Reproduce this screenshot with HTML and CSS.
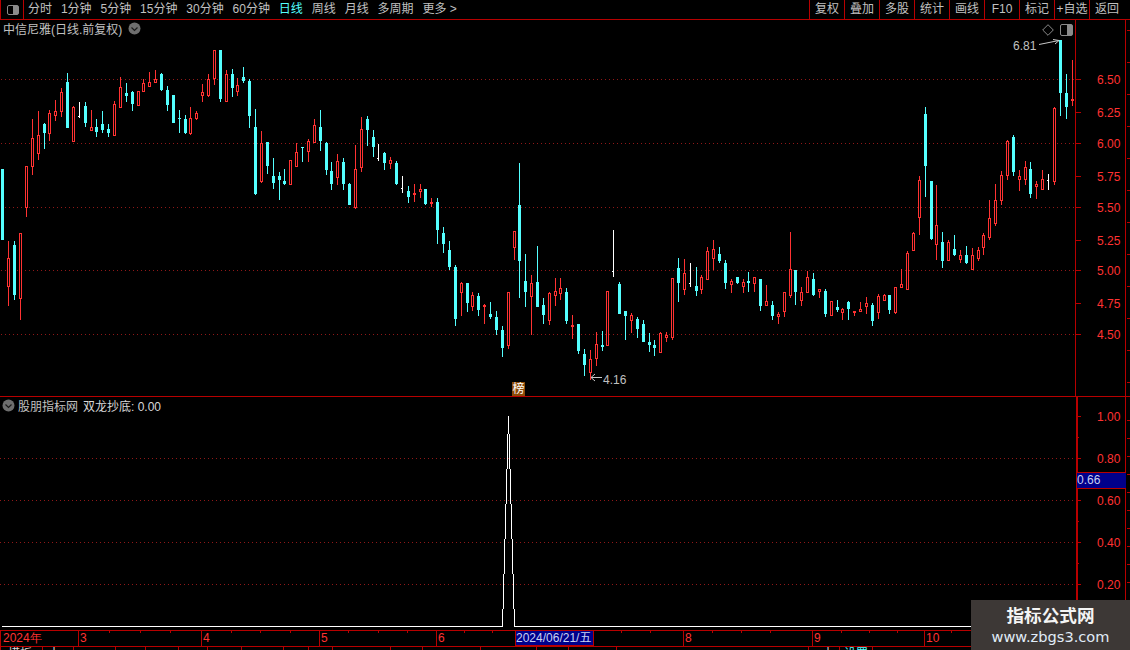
FILE: index.html
```html
<!DOCTYPE html>
<html lang="zh">
<head>
<meta charset="utf-8">
<title>中信尼雅</title>
<link rel="stylesheet" href="styles.css">
</head>
<body>
<div class="app">
  <header class="topbar">
    <div class="side-btn">
      <svg class="icon" width="14" height="12" viewBox="0 0 14 12"><rect x="1.5" y="1.5" width="11" height="9" rx="1.5" class="ic-line"/><rect x="7" y="2" width="5" height="8" class="ic-fill"/></svg>
    </div>
    <nav class="periods">
      <span>分时</span><span>1分钟</span><span>5分钟</span><span>15分钟</span><span>30分钟</span><span>60分钟</span><span class="active">日线</span><span>周线</span><span>月线</span><span>多周期</span><span>更多 &gt;</span>
    </nav>
    <nav class="tools">
      <span>复权</span><span>叠加</span><span>多股</span><span>统计</span><span>画线</span><span>F10</span><span>标记</span><span>+自选</span><span class="last">返回</span>
    </nav>
  </header>

  <section class="pane pane-main">
    <div class="pane-title">
      <span>中信尼雅(日线.前复权)</span>
      <svg class="chev" width="13" height="13" viewBox="0 0 13 13"><circle cx="6.5" cy="6.5" r="6" class="chev-bg"/><path d="M3.5 5.5 6.5 8.5 9.5 5.5" class="chev-line"/></svg>
    </div>
    <svg id="kline" class="plot" width="1075" height="376" viewBox="0 20 1075 376"></svg>
    <svg id="main-axis" class="axis" width="55" height="376" viewBox="1075 20 55 376"></svg>
    <div class="corner-tools">
      <svg width="12" height="12" viewBox="0 0 12 12"><path d="M6 .7 11.3 6 6 11.3 .7 6Z" class="ic-line"/></svg>
      <svg width="13" height="12" viewBox="0 0 13 12"><rect x=".5" y=".5" width="12" height="11" rx="1.5" class="ic-line"/><rect x="7" y="1" width="5" height="10" class="ic-fill"/></svg>
    </div>
    <span class="badge">榜</span>
  </section>

  <section class="pane pane-sub">
    <div class="pane-title sub-title">
      <svg class="chev" width="13" height="13" viewBox="0 0 13 13"><circle cx="6.5" cy="6.5" r="6" class="chev-bg"/><path d="M3.5 5.5 6.5 8.5 9.5 5.5" class="chev-line"/></svg>
      <span>股朋指标网</span>
      <span class="value">双龙抄底: 0.00</span>
    </div>
    <svg id="indicator" class="plot" width="1075" height="233" viewBox="0 397 1075 233"></svg>
    <svg id="sub-axis" class="axis" width="55" height="233" viewBox="1075 397 55 233"></svg>
    <div class="cursor-value">0.66</div>
  </section>

  <svg id="timebar" class="timebar" width="1130" height="20" viewBox="0 630 1130 20"></svg>

  <aside class="watermark">
    <div class="wm-title">指标公式网</div>
    <div class="wm-url">www.zbgs3.com</div>
  </aside>
</div>
<script src="script.js"></script>
</body>
</html>
```
FILE: styles.css
```css
* { box-sizing: border-box; }
html, body { margin: 0; padding: 0; background: #000; overflow: hidden; }
body { width: 1130px; height: 650px; font-family: "Liberation Sans", "Noto Sans CJK SC", sans-serif; font-size: 12px; color: #c0c0c0; }
.app { position: relative; width: 1130px; height: 650px; overflow: hidden; display: flex; flex-direction: column; }
svg { display: block; }

.topbar { display: flex; height: 20px; flex: none; border-bottom: 1px solid #b80000; border-left: 1px solid #b80000; }
.side-btn { width: 23px; flex: none; border-right: 1px solid #b80000; display: flex; align-items: center; justify-content: center; padding-left: 1px; }
.periods { display: flex; gap: 8.9px; padding-left: 4px; align-items: center; flex: 1; line-height: 19px; }
.periods .active { color: #54ffff; }
.tools { display: flex; align-items: stretch; line-height: 19px; }
.tools span { width: 35px; text-align: center; border-left: 1px solid #b80000; }
.tools .last { width: 41px; padding-right: 6px; }

.ic-line { fill: none; stroke: #8a8a8a; stroke-width: 1; }
.ic-fill { fill: #8a8a8a; }
.chev-bg { fill: #6e6e6e; }
.chev-line { fill: none; stroke: #1a1a1a; stroke-width: 1.2; }

.pane { position: relative; display: flex; flex: none; }
.pane-main { height: 377px; border-bottom: 1px solid #b80000; }
.pane-sub { height: 233px; }
.plot { flex: none; }
.axis { flex: none; }

.pane-title { position: absolute; left: 3px; top: 0; display: flex; align-items: center; gap: 6px; height: 17px; z-index: 1; }
.sub-title { left: 2px; top: 0; gap: 3px; height: 16px; }
.sub-title .value { margin-left: 2px; color: #d8d8d8; }

.corner-tools { position: absolute; left: 1042px; top: 4px; display: flex; gap: 6px; }
.badge { position: absolute; left: 512px; top: 362px; width: 13px; height: 14px; background: #8b4a08; color: #fff; font-size: 12px; line-height: 14px; text-align: center; }
.cursor-value { position: absolute; left: 1077px; top: 75px; width: 49px; height: 17px; background: #00008b; border-top: 1px solid #b80000; border-bottom: 1px solid #b80000; color: #c8d0f0; line-height: 15px; }

.timebar { flex: none; }
.watermark { position: absolute; left: 971px; top: 600px; width: 159px; height: 50px; background: #3d3836; text-align: center; }
.wm-title { font-family: "Noto Sans CJK SC", sans-serif; font-weight: 700; font-size: 17.6px; line-height: 24px; margin-top: 3px; color: #f4f4f4; }
.wm-url { font-family: "DejaVu Sans", sans-serif; font-size: 14.6px; line-height: 20px; color: #e0ecf8; }

.g-dot { stroke: #901818; stroke-width: 1; stroke-dasharray: 1 3; fill: none; }
.g-line { stroke: #b80000; stroke-width: 1; fill: none; }
.g-thick { stroke: #b80000; stroke-width: 2; fill: none; }
.ax-text { fill: #ff3232; font-family: "Liberation Sans", sans-serif; font-size: 12px; }
.note-text { fill: #c0c0c0; font-family: "Liberation Sans", sans-serif; font-size: 12px; }
.note-line { stroke: #c8c8c8; stroke-width: 1; fill: none; }
.peak { stroke: #fff; stroke-width: 1; fill: none; }
.tab-text { fill: #d8d8d8; font-family: "Noto Sans CJK SC", sans-serif; font-size: 12px; }
.tab-on { fill: #54ffff; }
.date-box { fill: #00008b; stroke: #b80000; stroke-width: 1; }
.date-text { fill: #c8d0f0; font-family: "Liberation Sans", "Noto Sans CJK SC", sans-serif; font-size: 12px; }
.cyan { fill: #54ffff; }
.red-fill { fill: #ff3232; }
.red-box { fill: #000; stroke: #ff3232; stroke-width: 1; }
.white { fill: #fff; }
```
FILE: script.js
```js
var NS = 'http://www.w3.org/2000/svg';
function el(parent, name, attrs, text) {
  var n = document.createElementNS(NS, name);
  for (var k in attrs) n.setAttribute(k, attrs[k]);
  if (text) n.textContent = text;
  parent.appendChild(n);
  return n;
}
function hline(p, x1, x2, y, cls) { el(p, 'line', {x1: x1, x2: x2, y1: y + 0.5, y2: y + 0.5, 'class': cls, 'shape-rendering': 'crispEdges'}); }
function vline(p, x, y1, y2, cls) { el(p, 'line', {x1: x + 0.5, x2: x + 0.5, y1: y1, y2: y2, 'class': cls, 'shape-rendering': 'crispEdges'}); }

/* candles, measured at 3x: [x, wickTop, wickBottom, bodyTop, bodyBottom, type] */
var A = [
[7,507,720,507,720,'c'],[25,723,918,775,860,'r'],[43,723,900,735,885,'c'],[61,700,960,700,896,'r'],[79,498,651,498,623,'r'],
[97,357,525,415,500,'r'],[115,333,480,405,461,'r'],[133,370,447,372,399,'c'],[148,330,423,340,401,'r'],[166,300,363,333,347,'r'],
[184,265,350,276,335,'r'],[202,220,384,245,384,'c'],[220,318,425,322,425,'r'],[238,306,353,347,348,'w'],[256,307,381,318,369,'c'],
[274,330,393,382,393,'r'],[289,357,411,381,396,'c'],[307,333,399,372,390,'c'],[325,372,411,387,399,'c'],[343,304,408,312,408,'r'],
[361,232,325,262,323,'r'],[379,250,305,279,288,'c'],[397,272,332,276,312,'c'],[415,273,318,273,318,'r'],[430,236,275,250,275,'r'],
[448,216,262,246,260,'r'],[466,211,249,238,248,'r'],[484,220,272,222,270,'c'],[502,258,332,270,315,'c'],[520,285,369,285,369,'c'],
[538,330,399,354,358,'c'],[556,345,402,357,399,'c'],[571,322,405,355,401,'r'],[589,333,360,340,358,'r'],[607,252,305,277,288,'r'],
[625,222,290,237,288,'r'],[643,151,255,151,236,'r'],[661,151,305,151,298,'c'],[679,210,305,222,305,'r'],[697,208,290,222,263,'c'],
[712,235,288,256,275,'r'],[730,201,249,231,243,'c'],[748,237,384,243,348,'c'],[766,327,585,381,582,'c'],[784,393,549,429,546,'r'],
[802,426,522,426,498,'c'],[820,474,567,528,549,'c'],[838,516,600,528,540,'c'],[853,507,555,543,552,'c'],[871,480,555,480,555,'r'],
[889,429,501,456,501,'r'],[907,441,486,441,444,'c'],[925,417,486,423,456,'r'],[943,357,429,375,429,'r'],[961,330,453,381,423,'c'],
[979,426,525,429,510,'c'],[994,486,570,513,552,'c'],[1012,462,555,483,534,'r'],[1030,474,570,486,552,'c'],[1048,549,615,552,615,'c'],
[1066,435,627,507,624,'r'],[1084,350,515,387,503,'r'],[1102,348,438,357,390,'c']
];
/* x offset 1080, y offset 360 */
var B = [
[40,30,111,51,81,'c'],[55,72,122,115,116,'w'],[73,96,150,99,129,'c'],[91,111,147,120,132,'r'],[109,123,195,129,192,'c'],
[127,168,219,205,206,'w'],[145,198,249,213,231,'c'],[163,192,246,219,225,'r'],[181,192,234,207,216,'r'],[196,207,255,207,252,'c'],
[214,234,261,246,252,'r'],[232,234,372,246,330,'c'],[250,321,399,339,372,'c'],[268,363,450,390,441,'c'],[286,435,618,441,597,'c'],
[304,486,588,489,519,'r'],[322,489,576,489,549,'c'],[337,516,573,525,561,'r'],[355,519,588,528,570,'c'],[373,552,612,555,561,'r'],
[391,546,597,582,591,'c'],[409,573,645,591,630,'c'],[427,618,711,630,684,'c'],[445,516,687,516,678,'r'],[463,333,420,333,384,'r'],
[478,129,534,255,423,'c'],[496,402,561,483,516,'c'],[514,465,645,489,531,'r'],[532,378,561,486,561,'c'],[550,534,612,555,585,'c'],
[568,516,615,519,603,'r'],[586,474,558,513,528,'r'],[601,474,540,504,522,'r'],[619,504,612,516,603,'c'],[637,585,657,615,621,'r'],
[655,612,702,612,693,'c'],[673,687,768,702,735,'c'],[691,690,780,717,759,'r'],[709,636,738,672,717,'r'],[727,633,693,675,681,'c'],
[742,513,678,513,678,'r'],[760,330,471,452,453,'w'],[778,486,582,492,582,'c'],[796,573,660,573,588,'c'],[814,579,639,585,603,'r'],
[832,591,654,597,627,'c'],[850,600,666,612,666,'c'],[868,639,696,666,675,'c'],[883,660,708,675,684,'c'],[901,636,699,639,699,'r'],
[919,636,666,645,654,'r'],[937,474,660,474,654,'r'],[955,414,546,444,489,'c'],[973,417,525,459,510,'r'],[991,429,501,488,489,'w'],
[1009,441,528,498,513,'c'],[1024,465,522,471,510,'r'],[1042,381,480,393,480,'r'],[1060,360,450,387,417,'r'],[1078,381,429,402,423,'c']
];
/* x offset 2160, y offset 360 */
var C = [
[16,420,507,429,489,'c'],[34,477,519,483,495,'r'],[52,471,492,471,489,'c'],[70,477,519,486,501,'r'],[85,456,516,483,489,'c'],
[103,471,516,471,492,'r'],[121,477,573,477,558,'c'],[139,495,558,543,558,'r'],[157,543,600,555,588,'c'],[175,576,612,582,591,'r'],
[193,516,591,516,576,'r'],[211,336,534,447,528,'r'],[226,450,555,450,516,'c'],[244,501,558,516,543,'r'],[262,453,519,471,519,'r'],
[280,459,528,477,525,'c'],[298,507,534,507,516,'r'],[316,507,591,513,582,'c'],[334,543,588,543,588,'r'],[352,540,576,561,570,'c'],
[367,564,600,567,579,'r'],[385,543,600,546,567,'c'],[403,573,588,573,579,'r'],[421,546,576,567,576,'r'],[439,531,582,549,561,'r'],
[457,549,618,555,603,'c'],[475,522,597,528,579,'r'],[493,522,543,525,543,'r'],[508,525,582,525,570,'c'],[526,501,582,501,579,'r'],
[544,447,504,492,504,'r'],[562,393,510,399,510,'r'],[580,336,393,339,393,'r'],[598,168,345,180,294,'r'],[616,-39,231,-18,138,'c'],
[634,183,360,183,357,'c'],[649,195,420,315,375,'r'],[667,336,444,366,423,'c'],[685,360,423,366,423,'r'],[703,345,408,387,405,'c'],
[721,390,429,405,420,'r'],[739,378,432,405,429,'c'],[757,384,450,405,450,'r'],[775,381,423,390,417,'r'],[790,339,405,345,384,'r'],
[808,240,360,294,354,'r'],[826,192,318,240,312,'r'],[844,153,255,165,243,'r'],[862,60,180,63,168,'r'],[880,45,168,51,156,'c'],
[898,150,213,168,180,'r'],[916,123,195,141,180,'r'],[931,126,234,147,222,'c'],[949,183,237,192,201,'r'],[967,150,210,177,210,'r'],
[985,162,210,181,182,'w'],[1003,-38,195,-35,186,'r']
];
/* already in 3x page coordinates */
var D = [
[3181,120,348,120,278,'c'],[3199,222,357,278,320,'c'],[3217,180,318,297,303,'f']
];

function candle(p, x3, wt, wb, bt, bb, t) {
  var cx = Math.floor(x3 / 3);
  var y = function (v) { return Math.round(v / 3); };
  var wickCls = t === 'c' ? 'cyan' : (t === 'w' ? 'white' : 'red-fill');
  el(p, 'rect', {x: cx, y: y(wt), width: 1, height: Math.max(1, y(wb) - y(wt)), 'class': wickCls});
  if (t === 'c') {
    el(p, 'rect', {x: cx - 1, y: y(bt), width: 3, height: Math.max(1, y(bb) - y(bt)), 'class': 'cyan'});
  } else if (t === 'f') {
    el(p, 'rect', {x: cx - 1, y: y(bt), width: 3, height: Math.max(1, y(bb) - y(bt)), 'class': 'red-fill'});
  } else if (t === 'w') {
    el(p, 'rect', {x: cx - 1, y: y(bt), width: 1, height: 1, 'class': 'white'});
  } else {
    el(p, 'rect', {x: cx - 0.5, y: y(bt) + 0.5, width: 2, height: Math.max(1, y(bb) - y(bt) - 1), 'class': 'red-box'});
  }
}

var kline = document.getElementById('kline');
[79, 143, 207, 270, 334].forEach(function (y) { hline(kline, 1, 1075, y, 'g-dot'); });
A.forEach(function (c) { candle(kline, c[0], c[1], c[2], c[3], c[4], c[5]); });
B.forEach(function (c) { candle(kline, c[0] + 1080, c[1] + 360, c[2] + 360, c[3] + 360, c[4] + 360, c[5]); });
C.forEach(function (c) { candle(kline, c[0] + 2160, c[1] + 360, c[2] + 360, c[3] + 360, c[4] + 360, c[5]); });
D.forEach(function (c) { candle(kline, c[0], c[1], c[2], c[3], c[4], c[5]); });

/* price notes */
el(kline, 'text', {x: 1013, y: 50, 'class': 'note-text'}, '6.81');
el(kline, 'path', {d: 'M1039 44.5 L1049 42.5 L1059 40.5 M1053 39.5 L1059 40.5 L1055 44', 'class': 'note-line'});
el(kline, 'text', {x: 603, y: 384, 'class': 'note-text'}, '4.16');
el(kline, 'path', {d: 'M602 377.5 H591 M595 374 L591 377.5 L595 381', 'class': 'note-line'});

/* main axis */
var ma = document.getElementById('main-axis');
vline(ma, 1075, 20, 396, 'g-line');
vline(ma, 1125, 20, 396, 'g-line');
[[79,'6.50'],[112,'6.25'],[143,'6.00'],[176,'5.75'],[207,'5.50'],[240,'5.25'],[270,'5.00'],[303,'4.75'],[334,'4.50']].forEach(function (l) {
  hline(ma, 1075, 1081, l[0], 'g-line');
  el(ma, 'text', {x: 1097, y: l[0] + 4.5, 'class': 'ax-text'}, l[1]);
});
for (var ty = 30; ty < 396; ty += 32) hline(ma, 1127, 1130, ty, 'g-line');

/* indicator: stepped spike, one pixel per column */
var ind = document.getElementById('indicator');
[458, 500, 542, 584].forEach(function (y) { hline(ind, 0, 1075, y, 'g-dot'); });
var steps = [[434, 469], [469, 504], [504, 539], [539, 574], [574, 609], [609, 626]];
hline(ind, 2, 503, 626, 'peak');
hline(ind, 514, 1075, 626, 'peak');
vline(ind, 508, 416, 434, 'peak');
steps.forEach(function (s, i) {
  vline(ind, 507 - i, s[0], s[1], 'peak');
  vline(ind, 509 + i, s[0], s[1], 'peak');
});

var sa = document.getElementById('sub-axis');
vline(sa, 1076, 397, 630, 'g-thick');
vline(sa, 1125, 397, 630, 'g-line');
[[416,'1.00'],[458,'0.80'],[500,'0.60'],[542,'0.40'],[584,'0.20']].forEach(function (l) {
  hline(sa, 1076, 1081, l[0], 'g-line');
  el(sa, 'text', {x: 1097, y: l[0] + 4.5, 'class': 'ax-text'}, l[1]);
});
[437, 521, 563].forEach(function (y) { hline(sa, 1076, 1079, y, 'g-line'); });
for (var sy = 420; sy < 630; sy += 18) hline(sa, 1127, 1130, sy, 'g-line');

/* time axis */
var tb = document.getElementById('timebar');
hline(tb, 0, 1130, 630, 'g-line');
hline(tb, 0, 1130, 646, 'g-line');
vline(tb, 0, 630, 650, 'g-line');
[[78,'3'],[201,'4'],[319,'5'],[436,'6'],[683,'8'],[812,'9'],[924,'10']].forEach(function (m) {
  vline(tb, m[0], 630, 646, 'g-line');
  el(tb, 'text', {x: m[0] + 2, y: 642, 'class': 'ax-text'}, m[1]);
});
[109, 140, 170, 231, 260, 290, 348, 378, 407, 464, 492, 621, 650, 712, 741, 770, 841, 869, 897, 951].forEach(function (x) { vline(tb, x, 630, 633, 'g-line'); });
el(tb, 'text', {x: 3, y: 642, 'class': 'ax-text'}, '2024年');
el(tb, 'rect', {x: 515.5, y: 630.5, width: 78, height: 15, 'class': 'date-box', 'shape-rendering': 'crispEdges'});
el(tb, 'text', {x: 516, y: 642, 'class': 'date-text'}, '2024/06/21/五');
[42, 73, 115, 145, 178, 207, 241, 283, 308, 332, 390, 422, 480, 536, 568, 616, 808, 839, 872].forEach(function (x) { vline(tb, x, 646, 650, 'g-line'); });
el(tb, 'text', {x: 8, y: 658, 'class': 'tab-text'}, '模板');
el(tb, 'text', {x: 48, y: 658, 'class': 'tab-text'}, '十');
el(tb, 'text', {x: 822, y: 658, 'class': 'tab-text'}, '十');
el(tb, 'text', {x: 844, y: 658, 'class': 'tab-text tab-on'}, '设置');
```
